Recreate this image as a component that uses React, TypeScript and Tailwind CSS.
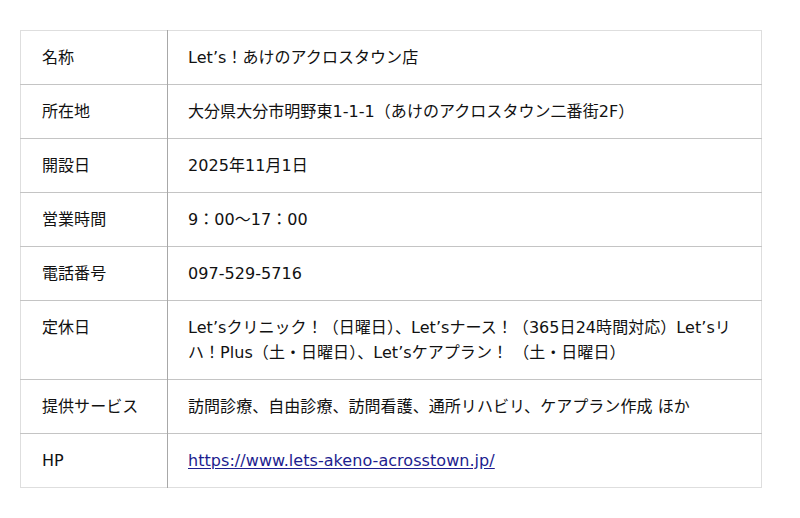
import React from 'react'

type Row = {
  label: string;
  value: React.ReactNode;
};

const rows: Row[] = [
  { label: "名称", value: "Let’s！あけのアクロスタウン店" },
  { label: "所在地", value: "大分県大分市明野東1-1-1（あけのアクロスタウン二番街2F）" },
  { label: "開設日", value: "2025年11月1日" },
  { label: "営業時間", value: "9：00〜17：00" },
  { label: "電話番号", value: "097-529-5716" },
  {
    label: "定休日",
    value: "Let’sクリニック！（日曜日）、Let’sナース！（365日24時間対応）Let’sリハ！Plus（土・日曜日）、Let’sケアプラン！ （土・日曜日）",
  },
  { label: "提供サービス", value: "訪問診療、自由診療、訪問看護、通所リハビリ、ケアプラン作成 ほか" },
  {
    label: "HP",
    value: (
      <a href="#" className="text-[#1d1d8f] underline underline-offset-2">
        https://www.lets-akeno-acrosstown.jp/
      </a>
    ),
  },
];

function App() {
  return (
    <div
      className="min-h-screen w-full bg-white pt-[30px] pl-[20px]"
      style={{ fontFamily: '"DejaVu Sans", "Noto Sans CJK JP", sans-serif' }}
    >
      {/* info table */}
      <table className="w-[742px] border-collapse border border-[#dedede] text-[16px] leading-[25px] tracking-[0.05px] text-[#111]">
        <tbody>
          {rows.map((row, i) => (
            <tr key={i} className="border-b border-[#c4c4c4] last:border-b-[#dedede]">
              <td className="w-[147px] border-r border-[#a8a8a8] px-[21px] py-[14px] align-top">
                {row.label}
              </td>
              <td className="px-[20px] py-[14px] align-top">{row.value}</td>
            </tr>
          ))}
        </tbody>
      </table>
    </div>
  )
}

export default App
